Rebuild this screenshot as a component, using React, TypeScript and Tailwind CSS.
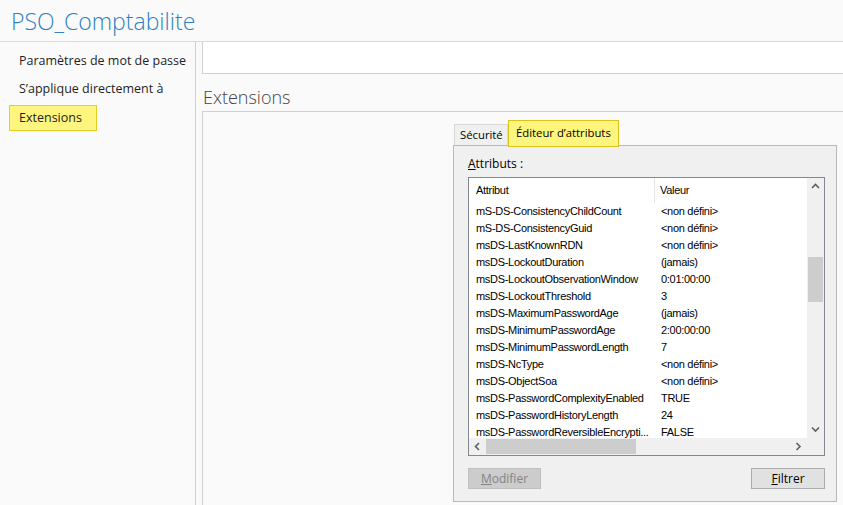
import React from 'react';

const rows: [string, string][] = [
    ['mS-DS-ConsistencyChildCount', '<non défini>'],
    ['mS-DS-ConsistencyGuid', '<non défini>'],
    ['msDS-LastKnownRDN', '<non défini>'],
    ['msDS-LockoutDuration', '(jamais)'],
    ['msDS-LockoutObservationWindow', '0:01:00:00'],
    ['msDS-LockoutThreshold', '3'],
    ['msDS-MaximumPasswordAge', '(jamais)'],
    ['msDS-MinimumPasswordAge', '2:00:00:00'],
    ['msDS-MinimumPasswordLength', '7'],
    ['msDS-NcType', '<non défini>'],
    ['msDS-ObjectSoa', '<non défini>'],
    ['msDS-PasswordComplexityEnabled', 'TRUE'],
    ['msDS-PasswordHistoryLength', '24'],
    ['msDS-PasswordReversibleEncrypti...', 'FALSE'],
];

function Chevron({ dir }: { dir: 'up' | 'down' | 'left' | 'right' }) {
    const d = {
        up: 'M1 5 L4.5 1.5 L8 5',
        down: 'M1 1.5 L4.5 5 L8 1.5',
        left: 'M5 1 L1.5 4.5 L5 8',
        right: 'M1.5 1 L5 4.5 L1.5 8',
    }[dir];
    const vertical = dir === 'up' || dir === 'down';
    return (
        <svg width={vertical ? 9 : 7} height={vertical ? 7 : 9} viewBox={vertical ? '0 0 9 7' : '0 0 7 9'}>
            <path d={d} fill="none" stroke="#606060" strokeWidth="1.6" />
        </svg>
    );
}

export default function App() {
    return (
        <div className="w-[843px] h-[505px] overflow-hidden bg-[#fafafa] flex flex-col font-['Open_Sans',sans-serif] text-[#1e1e1e]">
            {/* Title */}
            <header className="h-[42px] shrink-0 border-b border-[#d9d9d9] pl-[11px] flex items-center">
                <h1 className="text-[23px] leading-[30px] font-light text-[#2f7fbf] mt-[1px]">PSO_Comptabilite</h1>
            </header>

            <div className="flex flex-1 min-h-0">
                {/* Sidebar */}
                <aside className="w-[196px] shrink-0 border-r border-[#d0d0d0] pt-[10px] pl-[9px] flex flex-col text-[12.5px]">
                    <div className="h-[28px] leading-[18px] pl-[10px]">Paramètres de mot de passe</div>
                    <div className="h-[28px] leading-[18px] pl-[10px]">S’applique directement à</div>
                    <div className="w-[88px] h-[26px] -mt-[3px] leading-[24px] pl-[9px] bg-[#fdf57d] border border-[#e8cb2a]">Extensions</div>
                </aside>

                {/* Content */}
                <main className="flex-1 min-w-0 pl-[6px] flex flex-col">
                    <div className="h-[32px] shrink-0 border-l border-b border-[#d0d0d0] bg-white" />
                    <h2 className="h-[37px] shrink-0 pt-[11px] pl-[1px] text-[18px] leading-[24px] font-light text-[#444]">Extensions</h2>
                    <div className="flex-1 border-l border-t border-[#d0d0d0] flex justify-end pt-[8px] pr-[6px]">
                        <div className="w-[384px] flex flex-col text-[12px] text-black">
                            {/* Tabs */}
                            <div className="flex items-end h-[26px] pl-[1px] relative z-10 text-[11.3px]">
                                <div className="h-[21px] mb-[1px] w-[54px] pl-[5px] bg-[#f0f0f0] border border-b-0 border-[#d9d9d9] leading-[19px]">Sécurité</div>
                                <div className="h-[27px] -mb-[1px] w-[111px] pl-[7px] bg-[#fdf57d] border border-[#dcc21c] leading-[24px]">Éditeur d’attributs</div>
                            </div>

                            {/* Panel */}
                            <div className="h-[357px] -mt-[1px] bg-[#f0f0f0] border border-[#b9b9b9] pl-[14px] pr-[11px]">
                                <div className="pt-[11px] h-[31px] leading-[14px]"><span className="underline">A</span>ttributs :</div>

                                {/* List view */}
                                <div className="w-[357px] h-[279px] border border-[#828790] bg-white flex flex-col font-['Liberation_Sans',sans-serif] text-[11px] tracking-[-0.3px]">
                                    <div className="flex flex-1 min-h-0">
                                        <div className="flex-1 min-w-0 overflow-hidden">
                                            <div className="flex h-[25px] items-center">
                                                <div className="w-[186px] h-full pl-[7px] flex items-center border-r border-[#e5e5e5]">Attribut</div>
                                                <div className="pl-[5px]">Valeur</div>
                                            </div>
                                            {rows.map(([a, v]) => (
                                                <div key={a} className="flex h-[17px] items-center whitespace-nowrap">
                                                    <div className="w-[186px] pl-[7px]">{a}</div>
                                                    <div className="pl-[6px]">{v}</div>
                                                </div>
                                            ))}
                                        </div>
                                        {/* Vertical scrollbar */}
                                        <div className="w-[17px] shrink-0 bg-[#f0f0f0] flex flex-col">
                                            <div className="h-[17px] flex items-center justify-center"><Chevron dir="up" /></div>
                                            <div className="h-[62px]" />
                                            <div className="h-[45px] mx-[1px] bg-[#cdcdcd]" />
                                            <div className="flex-1" />
                                            <div className="h-[17px] flex items-center justify-center"><Chevron dir="down" /></div>
                                        </div>
                                    </div>
                                    {/* Horizontal scrollbar */}
                                    <div className="h-[17px] shrink-0 flex bg-[#f0f0f0]">
                                        <div className="w-[17px] flex items-center justify-center"><Chevron dir="left" /></div>
                                        <div className="w-[150px] my-[1px] bg-[#cdcdcd]" />
                                        <div className="flex-1" />
                                        <div className="w-[17px] flex items-center justify-center"><Chevron dir="right" /></div>
                                        <div className="w-[17px]" />
                                    </div>
                                </div>

                                {/* Buttons */}
                                <div className="flex justify-between mt-[12px]">
                                    <button className="w-[73px] h-[21px] bg-[#cccccc] border border-[#bfbfbf] text-[#838383] leading-[19px]">
                                        <span className="underline">M</span>odifier
                                    </button>
                                    <button className="w-[74px] h-[21px] bg-[#e1e1e1] border border-[#adadad] leading-[19px]">
                                        <span className="underline">F</span>iltrer
                                    </button>
                                </div>
                            </div>
                        </div>
                    </div>
                </main>
            </div>
        </div>
    );
}
